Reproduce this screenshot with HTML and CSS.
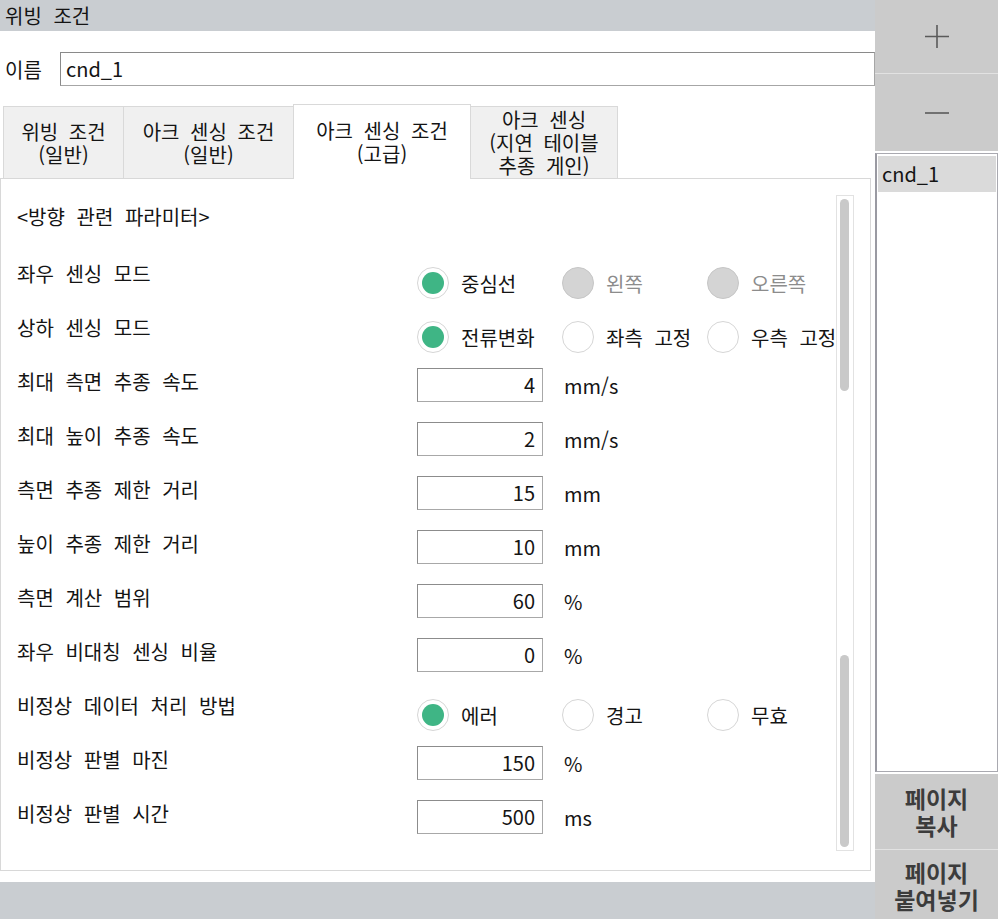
FILE: index.html
```html
<!DOCTYPE html>
<html lang="ko">
<head>
<meta charset="utf-8">
<title>위빙 조건</title>
<link rel="stylesheet" href="styles.css">
</head>
<body>
<div class="app">
  <div class="main">
    <div class="titlebar">위빙 조건</div>
    <div class="name-row">
      <span class="name-label">이름</span>
      <div class="name-input">cnd_1</div>
    </div>
    <div class="tabs">
      <div class="tab t1">위빙 조건<br>(일반)</div>
      <div class="tab t2">아크 센싱 조건<br>(일반)</div>
      <div class="tab t3 active">아크 센싱 조건<br>(고급)</div>
      <div class="tab t4">아크 센싱<br>(지연 테이블<br>추종 게인)</div>
    </div>
    <div class="panel">
      <div class="content">
        <div class="section-title">&lt;방향 관련 파라미터&gt;</div>
        <div class="row">
          <div class="label">좌우 센싱 모드</div>
          <div class="radios">
            <div class="radio"><span class="dot on"></span>중심선</div>
            <div class="radio disabled"><span class="dot off"></span>왼쪽</div>
            <div class="radio disabled"><span class="dot off"></span>오른쪽</div>
          </div>
        </div>
        <div class="row">
          <div class="label">상하 센싱 모드</div>
          <div class="radios">
            <div class="radio"><span class="dot on"></span>전류변화</div>
            <div class="radio"><span class="dot"></span>좌측 고정</div>
            <div class="radio"><span class="dot"></span>우측 고정</div>
          </div>
        </div>
        <div class="row">
          <div class="label">최대 측면 추종 속도</div>
          <div class="field"><div class="num">4</div><span class="unit">mm/s</span></div>
        </div>
        <div class="row">
          <div class="label">최대 높이 추종 속도</div>
          <div class="field"><div class="num">2</div><span class="unit">mm/s</span></div>
        </div>
        <div class="row">
          <div class="label">측면 추종 제한 거리</div>
          <div class="field"><div class="num">15</div><span class="unit">mm</span></div>
        </div>
        <div class="row">
          <div class="label">높이 추종 제한 거리</div>
          <div class="field"><div class="num">10</div><span class="unit">mm</span></div>
        </div>
        <div class="row">
          <div class="label">측면 계산 범위</div>
          <div class="field"><div class="num">60</div><span class="unit">%</span></div>
        </div>
        <div class="row">
          <div class="label">좌우 비대칭 센싱 비율</div>
          <div class="field"><div class="num">0</div><span class="unit">%</span></div>
        </div>
        <div class="row">
          <div class="label">비정상 데이터 처리 방법</div>
          <div class="radios">
            <div class="radio"><span class="dot on"></span>에러</div>
            <div class="radio"><span class="dot"></span>경고</div>
            <div class="radio"><span class="dot"></span>무효</div>
          </div>
        </div>
        <div class="row">
          <div class="label">비정상 판별 마진</div>
          <div class="field"><div class="num">150</div><span class="unit">%</span></div>
        </div>
        <div class="row">
          <div class="label">비정상 판별 시간</div>
          <div class="field"><div class="num">500</div><span class="unit">ms</span></div>
        </div>
      </div>
      <div class="track">
        <div class="thumb thumb-top"></div>
        <div class="thumb thumb-bottom"></div>
      </div>
    </div>
    <div class="bottombar"></div>
  </div>
  <div class="side">
    <div class="sbtn plus">
      <svg width="26" height="26" viewBox="0 0 26 26"><path d="M1 12.5H25M13 1V24" stroke="#5a5a5a" stroke-width="1.6" fill="none"/></svg>
    </div>
    <div class="sbtn minus">
      <svg width="26" height="4" viewBox="0 0 26 4"><path d="M1 2H25" stroke="#5a5a5a" stroke-width="1.6" fill="none"/></svg>
    </div>
    <div class="list">
      <div class="item selected">cnd_1</div>
    </div>
    <div class="sbtn page copy">페이지<br>복사</div>
    <div class="sbtn page paste">페이지<br>붙여넣기</div>
  </div>
</div>
</body>
</html>
```
FILE: styles.css
```css
html, body {
  margin: 0;
  padding: 0;
}
body {
  width: 1001px;
  height: 919px;
  overflow: hidden;
  background: #ffffff;
  font-family: "Noto Sans CJK KR", "Noto Sans", sans-serif;
  font-size: 20px;
  color: #141414;
  word-spacing: 6px;
}
.app {
  display: flex;
  height: 919px;
}
.main {
  width: 875px;
  flex: none;
  display: flex;
  flex-direction: column;
}
.titlebar {
  height: 31px;
  background: #c9cdd1;
  padding-left: 5px;
  line-height: 31px;
}
.name-row {
  display: flex;
  align-items: center;
  margin-top: 21px;
  height: 34px;
}
.name-label {
  width: 60px;
  padding-left: 5px;
  box-sizing: border-box;
  flex: none;
}
.name-input {
  flex: 1;
  height: 34px;
  box-sizing: border-box;
  border: 1px solid #8a8a8a;
  border-right-color: #a6a6a6;
  border-bottom-color: #a6a6a6;
  padding-left: 5px;
  line-height: 32px;
}
.tabs {
  display: flex;
  align-items: flex-end;
  height: 74px;
  margin-top: 18px;
  padding-left: 3px;
  position: relative;
  z-index: 1;
}
.tab {
  height: 72px;
  box-sizing: border-box;
  border: 1px solid #d9d9d9;
  border-bottom: none;
  background: #f0f0f0;
  display: flex;
  align-items: center;
  justify-content: center;
  text-align: center;
  line-height: 23px;
  margin-left: -1px;
  flex: none;
  word-spacing: 5px;
}
.tab.t1 { width: 121px; margin-left: 0; }
.tab.t2 { width: 171px; }
.tab.t3 { width: 178px; }
.tab.t4 { width: 148px; }
.tab.active {
  height: 75px;
  background: #ffffff;
  margin-bottom: -1px;
}
.panel {
  width: 871px;
  height: 693px;
  box-sizing: border-box;
  border: 1px solid #d8d8d8;
  display: flex;
  flex: none;
}
.content {
  width: 835px;
  flex: none;
  overflow: hidden;
  padding-left: 16px;
  box-sizing: border-box;
}
.section-title {
  height: 68px;
  padding-top: 27px;
  box-sizing: border-box;
  line-height: 22px;
}
.row {
  display: flex;
  height: 54px;
}
.label {
  width: 400px;
  flex: none;
  line-height: 22px;
  margin-top: 16px;
}
.field {
  display: flex;
  align-items: center;
  height: 34px;
  margin-top: 13px;
  flex: none;
}
.num {
  width: 126px;
  height: 34px;
  box-sizing: border-box;
  border: 1px solid #8c8c8c;
  border-right-color: #a8a8a8;
  border-bottom-color: #a8a8a8;
  text-align: right;
  padding-right: 7px;
  line-height: 32px;
}
.unit {
  margin-left: 21px;
}
.radios {
  display: flex;
  height: 32px;
  margin-top: 20px;
  flex: none;
}
.radio {
  width: 145px;
  flex: none;
  display: flex;
  align-items: center;
  gap: 12px;
  white-space: nowrap;
}
.dot {
  width: 32px;
  height: 32px;
  flex: none;
  border-radius: 50%;
  border: 1px solid #d6d6d6;
  box-sizing: border-box;
  background: #ffffff;
  display: flex;
  align-items: center;
  justify-content: center;
}
.dot.on::after {
  content: "";
  width: 22px;
  height: 22px;
  border-radius: 50%;
  background: #3fb585;
}
.dot.off {
  background: #d4d4d4;
  border-color: #c6c6c6;
}
.radio.disabled {
  color: #8c8c8c;
}
.track {
  width: 18px;
  height: 656px;
  margin-top: 16px;
  box-sizing: border-box;
  border: 1px solid #e2e2e2;
  position: relative;
  flex: none;
}
.thumb {
  position: absolute;
  left: 3px;
  width: 9px;
  height: 192px;
  border-radius: 5px;
  background: #c9c9c9;
}
.thumb-top { top: 3px; }
.thumb-bottom { top: 459px; }
.bottombar {
  margin-top: 11px;
  height: 37px;
  background: #c9cdd1;
}
.side {
  width: 123px;
  flex: none;
  display: flex;
  flex-direction: column;
}
.sbtn {
  background: #cbcbcb;
  display: flex;
  align-items: center;
  justify-content: center;
  flex: none;
}
.plus {
  height: 73px;
  border-bottom: 1px solid #e2e2e2;
}
.minus {
  height: 77px;
}
.list {
  margin-top: 2px;
  height: 619px;
  box-sizing: border-box;
  border: 1px solid #a9a9b0;
  border-left: 2px solid #9a9aa2;
  padding: 2px 1px 0 1px;
  background: #ffffff;
  flex: none;
}
.item {
  height: 36px;
  line-height: 36px;
  padding-left: 4px;
}
.item.selected {
  background: #dadada;
}
.page {
  flex-direction: column;
  font-weight: bold;
  color: #3c3c3c;
  font-size: 23px;
  line-height: 27px;
  text-align: center;
  word-spacing: 0;
}
.copy {
  margin-top: 2px;
  height: 75px;
  border-bottom: 1px solid #e2e2e2;
}
.paste {
  height: 72px;
}
```
